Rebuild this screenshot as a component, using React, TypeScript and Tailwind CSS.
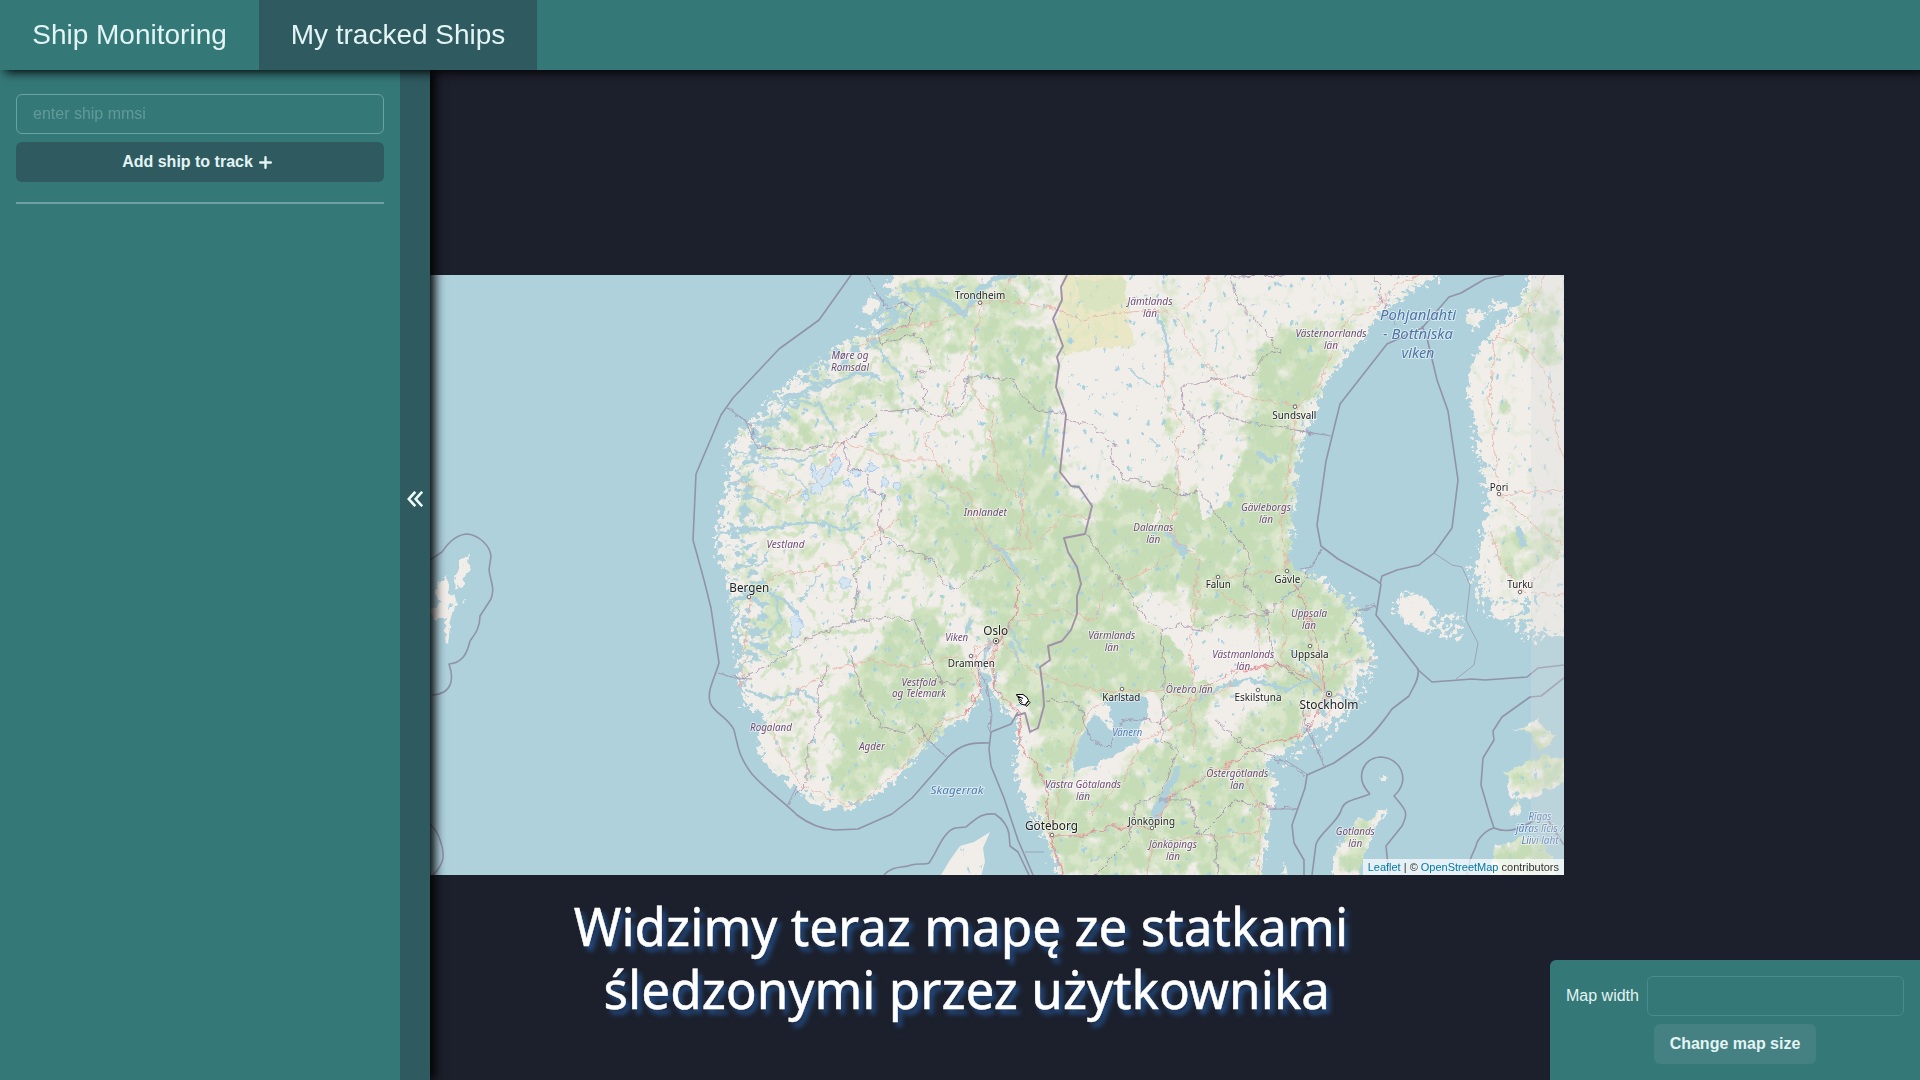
import React from 'react';

type Kind = 'city' | 'major' | 'county' | 'water' | 'sea' | 'gulf';
type Label = [string, number, number, number, Kind];

const LABELS: Label[] = [
  ['Trondheim', 980, 299.3, 50.7, 'city'],
  ['Møre og', 850, 359, 37, 'county'],
  ['Romsdal', 850, 371, 38, 'county'],
  ['Innlandet', 985.3, 516, 43, 'county'],
  ['Vestland', 785.5, 548, 38, 'county'],
  ['Jämtlands', 1150, 305, 45, 'county'],
  ['län', 1150, 317, 14, 'county'],
  ['Västernorrlands', 1331, 337.3, 71, 'county'],
  ['län', 1331, 349.3, 14, 'county'],
  ['Sundsvall', 1294.3, 418.7, 44, 'city'],
  ['Pori', 1499, 490.7, 18.5, 'city'],
  ['Gävleborgs', 1266, 511.3, 50, 'county'],
  ['län', 1266, 523.3, 14, 'county'],
  ['Dalarnas', 1153.3, 530.7, 40, 'county'],
  ['län', 1153.3, 542.7, 14, 'county'],
  ['Pohjanlahti', 1418, 320.3, 76, 'gulf'],
  ['- Bottniska', 1418, 339, 70, 'gulf'],
  ['viken', 1418, 358, 33, 'gulf'],
  ['Bergen', 749.3, 592, 40, 'major'],
  ['Rogaland', 771, 731.3, 42, 'county'],
  ['Viken', 956.7, 641.3, 23, 'county'],
  ['Oslo', 995.7, 635, 25, 'major'],
  ['Drammen', 971.3, 667, 47, 'city'],
  ['Vestfold', 919, 685.7, 35, 'county'],
  ['og Telemark', 919, 697.3, 54, 'county'],
  ['Agder', 872, 750.3, 26, 'county'],
  ['Värmlands', 1111.7, 639, 47, 'county'],
  ['län', 1111.7, 651, 14, 'county'],
  ['Karlstad', 1121.3, 700.5, 38, 'city'],
  ['Vänern', 1127.3, 736.3, 30, 'water'],
  ['Skagerrak', 957, 794.3, 53, 'sea'],
  ['Västra Götalands', 1083, 787.5, 76, 'county'],
  ['län', 1083, 799.5, 14, 'county'],
  ['Göteborg', 1051.5, 830, 53, 'major'],
  ['Jönköping', 1151.5, 824.7, 47, 'city'],
  ['Jönköpings', 1173, 847.5, 48, 'county'],
  ['län', 1173, 859.5, 14, 'county'],
  ['Falun', 1218.3, 588, 25, 'city'],
  ['Gävle', 1287.3, 582.5, 26, 'city'],
  ['Uppsala', 1309, 616.7, 36, 'county'],
  ['län', 1309, 628.5, 14, 'county'],
  ['Turku', 1520.3, 587.5, 26, 'city'],
  ['Uppsala', 1309.7, 657.5, 38, 'city'],
  ['Västmanlands', 1243.3, 658, 62, 'county'],
  ['län', 1243.3, 670, 14, 'county'],
  ['Örebro län', 1189.3, 693, 47, 'county'],
  ['Eskilstuna', 1258, 700.7, 47, 'city'],
  ['Stockholm', 1329, 709, 59, 'major'],
  ['Östergötlands', 1237.3, 776.7, 62, 'county'],
  ['län', 1237.3, 788.7, 14, 'county'],
  ['Gotlands', 1355.3, 835, 39, 'county'],
  ['län', 1355.3, 847, 14, 'county'],
  ['Rīgas', 1540, 820.3, 23, 'water'],
  ['jūras līcis /', 1540, 832, 48, 'water'],
  ['Liivi laht', 1540, 844, 37, 'water'],
];

const KIND: Record<Kind, { size: number; fill: string; italic: boolean }> = {
  city: { size: 10.4, fill: '#222222', italic: false },
  major: { size: 12.2, fill: '#222222', italic: false },
  county: { size: 10.2, fill: '#6f4d75', italic: true },
  water: { size: 10.2, fill: '#4f7db5', italic: true },
  sea: { size: 11.4, fill: '#4f7db0', italic: true },
  gulf: { size: 15, fill: '#4a76a8', italic: true },
};

const DOTS: [number, number][] = [
  [980, 302.7], [1295, 406.7], [1499, 494], [749, 597], [971, 656], [1122, 689], [1052, 835],
  [1152, 828], [1218, 577], [1287, 571], [1310, 646], [1258, 690], [1520, 592],
];

const SCANDINAVIA =
  'M892 275 L884 288 L905 292 L890 310 L867 330 L847 342 L828 357 L815 370 L797 374 L783 393 L763 413 L743 430 L733 443 L731 467 L725 493 L723 513 L718 533 L723 560 L727 577 L733 600 L738 627 L742 660 L743 707 L757 710 L763 720 L758 743 L767 767 L797 787 L807 800 L830 808 L853 807 L873 797 L893 783 L913 760 L937 737 L953 723 L967 720 L980 700 L981 684 L977 672 L986 668 L993 677 L993 693 L1003 710 L1018 720 L1018 747 L1017 773 L1028 807 L1040 823 L1047 843 L1060 880 L1261 880 L1267 843 L1273 810 L1277 780 L1262 762 L1283 752 L1303 737 L1320 727 L1347 713 L1357 683 L1374 657 L1360 620 L1340 597 L1323 580 L1303 573 L1290 565 L1292 520 L1297 473 L1300 447 L1313 417 L1320 390 L1340 363 L1363 337 L1383 310 L1407 293 L1450 270 L892 270Z';
const FINLAND =
  'M1532 270 L1520 303 L1493 330 L1473 358 L1467 393 L1477 427 L1483 467 L1488 500 L1483 533 L1477 560 L1480 580 L1490 602 L1527 600 L1532 630 L1570 637 L1570 270Z';
const ISLANDS = [
  'M864 303 l10 -5 l7 5 l-2 9 l-10 3 l-7 -6z',
  'M884 296 l24 -13 l17 -3 l-4 9 l-20 10z',
  'M738 426 l16 6 l6 11 l-14 -5z',
  'M728 450 l12 4 l8 8 l-14 4z',
  'M1400 598 l16 -5 l14 7 l6 15 l-12 12 l-16 -2 l-11 -12z',
  'M1418 622 l12 4 l-4 7 l-8 -3z M1434 625 l10 -4 l-2 8z M1456 637 l8 -2 l-4 7z',
  'M1490 610 l12 -8 l22 3 l-4 8 l-22 7z',
  'M1466 311 l12 -4 l6 9 l-8 12 l-9 -5z M1490 306 l14 -4 l4 6 l-12 4z',
  'M1512 728 l14 1 l12 -14 l4 14 l14 6 l-6 10 l-13 6 l-5 -17z',
  'M1503 772 l14 -5 l28 -12 l19 4 l6 -8 v30 l-20 8 l-18 8 l-16 3 l-10 -12 l4 -8z',
  'M1509 812 l11 -12 l-1 14 l-8 4z',
  'M1490 880 l5 -33 l38 -12 l20 22 l3 25z',
  'M1333 880 l0 -26 l14 -20 l12 -16 l12 3 l10 -11 l8 3 l-14 11 l-6 20 l-7 18 l-3 20z',
  'M1280 872 l5 -8 l2 10z',
  'M1380 776 l5 0 l1 4 l-5 0z',
];
const SKERRIES: [string, number][] = [
  ['M880 282 L850 338 L815 364 L780 388 L745 424 L726 446 L726 490 L716 520 L716 555 L730 590 L734 630 L740 700', 9],
  ['M1395 600 L1430 620 L1465 630', 32],
  ['M1478 560 L1490 600 L1525 620 L1545 640', 34],
  ['M1470 420 L1480 470 L1484 520', 8],
  ['M1376 640 L1370 675 L1358 705 L1325 738 L1280 765', 12],
  ['M1024 725 L1014 770 L1032 815 L1046 845', 10],
  ['M1500 300 L1470 330', 16],
  ['M1345 590 L1365 620', 12],
];
const COAST_INLETS: [string, number][] = [
  ['M905 300 L860 345 L805 390 L760 440 L745 480 L740 540 L752 600 L758 670', 34],
  ['M1362 650 L1345 695 L1300 735 L1275 765', 16],
  ['M1240 690 L1290 682 L1330 700', 14],
  ['M880 290 L930 290 L985 285', 18],
  ['M1270 800 L1262 875', 10],
];
const DENMARK = 'M938 880 L950 860 L960 846 L974 842 L990 832 L983 848 L985 862 L980 880Z';
const SHETLAND =
  'M464 557 l6 -2 l-1 12 l-6 14 l2 4 l-10 5 l-1 -12z M441 580 l6 -5 l1 18 l8 4 l-2 14 l-4 14 l-2 20 l-4 -2 l2 -24 l-12 0 l-3 -10 l10 -6 l-6 -8z M461 600 l4 -1 l-2 4z';

const GREENS: [string, number][] = [
  ['M900 275 L1040 275 L1060 350 L1064 410 L1000 400 L960 360 L900 340 L870 330Z', 0.78],
  ['M1000 385 L1050 390 L1065 480 L1085 500 L1075 560 L1080 640 L1060 690 L1000 660 L970 600 L945 550 L940 500 L990 450Z', 0.9],
  ['M1055 545 L1080 545 L1090 490 L1100 560 L1080 640 L1060 720 L1035 710 L1045 660Z', 1],
  ['M735 430 L830 360 L900 320 L930 400 L880 420 L830 450 L745 460Z', 0.6],
  ['M735 470 L870 490 L860 540 L800 560 L735 540Z', 0.52],
  ['M890 470 L960 470 L970 570 L930 590 L890 550Z', 0.7],
  ['M840 690 L890 620 L930 600 L985 690 L940 735 L860 805 L825 800 L835 740Z', 0.95],
  ['M740 570 L800 560 L800 600 L790 680 L750 660Z', 0.68],
  ['M770 700 L830 700 L810 780 L775 760Z', 0.5],
  ['M985 660 L1035 660 L1030 715 L1005 705Z', 0.85],
  ['M1075 535 L1120 478 L1195 490 L1290 440 L1292 560 L1350 600 L1330 640 L1240 610 L1180 600 L1140 590 L1130 610 L1180 650 L1170 700 L1060 700 L1090 600Z', 1],
  ['M1252 355 L1275 325 L1300 325 L1330 350 L1322 390 L1300 420 L1295 520 L1260 520 L1235 440 L1255 400Z', 1],
  ['M1200 395 L1235 392 L1225 415 L1200 410Z', 0.9],
  ['M1108 570 L1180 520 L1250 540 L1285 560 L1260 640 L1200 610 L1170 560 L1130 590Z', 0.9],
  ['M1160 640 L1200 600 L1220 690 L1200 760 L1165 740Z', 0.9],
  ['M1030 790 L1090 790 L1150 740 L1200 745 L1260 740 L1270 790 L1262 880 L1060 880Z', 0.9],
  ['M1280 600 L1360 600 L1365 660 L1340 700 L1290 720 L1260 690Z', 0.85],
  ['M1225 720 L1300 700 L1310 735 L1260 755Z', 0.9],
  ['M1030 690 L1095 690 L1085 750 L1050 800 L1030 790Z', 0.9],
  ['M1160 280 L1180 280 L1185 330 L1165 350Z', 0.7],
  ['M1162 395 L1176 395 L1176 485 L1162 485Z', 0.85],
  ['M1285 345 L1370 300 L1360 330 L1320 375Z', 0.65],
  ['M1520 290 L1564 275 L1564 370 L1530 370 L1505 340Z', 0.7],
  ['M1490 400 L1510 396 L1512 410 L1495 416Z', 1],
  ['M1487 530 L1564 510 L1564 560 L1500 590Z', 0.75],
  ['M1500 740 L1570 710 L1570 800 L1500 800Z', 0.85],
  ['M1490 840 L1560 830 L1560 880 L1490 880Z', 1],
  ['M1335 820 L1385 812 L1370 880 L1335 880Z', 0.75],
];

const VALLEYS: [string, number][] = [
  ['M730 275 L1065 275 L1065 420 L1080 500 L1080 700 L940 740 L870 800 L800 790 L730 700Z', 0.85],
  ['M1065 275 L1560 275 L1560 640 L1065 460Z', 0.25],
];

const SEA_BORDERS = [
  'M851 275 L819 320 L779 349 L733 398 L721 415 L696 474 L693 540 L704 580 L711 608 L719 663 C714 680 707 690 710 702 C712 712 728 717 734 730 C738 745 738 756 752 774 C764 788 785 803 797 815 C810 825 822 829 835 830 L858 829 L892 814 L912 798 L948 757 C960 745 970 742 990 743',
  'M1018 712 L1011 724 L991 732 L989 749 L991 766 L1004 798 L1018 840 L1033 875',
  'M884 875 C892 865 905 868 911 865 C918 863 925 865 929 863 C938 850 943 832 955 828 L966 827 C978 817 982 813 995 814 C1004 820 1008 828 1009 834 L1010 846 L1018 852 L1029 875',
  'M430 560 L442 552 C450 540 459 534 468 534 C480 536 490 546 491 556 L489 570 C491 583 495 588 491 599 L480 616 C480 628 475 634 470 641 C467 654 462 663 449 664 C454 678 453 694 432 695',
  'M430 824 C439 832 444 848 443 858 C442 865 438 870 433 875',
  'M1504 275 L1485 279 L1461 293 L1449 297 L1422 328 L1387 344 L1340 404 L1326 461 L1317 525 L1321 546 L1338 559 L1376 580 L1381 584 L1376 615 L1418 669 C1420 680 1411 690 1409 696 L1392 709 C1380 726 1372 736 1361 744 L1334 763 L1307 775 L1305 788 L1292 825 L1294 843 L1304 860 L1304 875',
  'M1422 326 L1427 338 L1437 380 L1448 411 L1458 480 L1452 528 L1434 553 L1419 565 L1397 570 L1382 576 L1380 584',
  'M1417 669 L1432 682 L1472 679 L1485 680 L1527 677 L1538 668 L1564 665',
  'M1564 678 L1541 696 L1530 697 L1502 717 L1493 731 L1494 740 L1483 758 L1481 785 L1490 816 L1494 828 C1485 830 1477 840 1476 846 L1470 860 L1467 875',
  'M1494 828 C1510 835 1525 826 1535 820 M1548 820 L1564 845',
  'M1370 794 C1354 778 1363 758 1380 757 C1400 757 1412 780 1394 796 C1406 810 1409 812 1402 826 L1386 846 L1389 875',
  'M1370 794 C1355 800 1345 800 1342 808 C1338 823 1321 831 1316 844 L1312 875',
];

const LAND_BORDER =
  'M1067 275 L1061 287 L1062 300 L1053 319 L1063 346 L1057 357 L1059 365 L1056 387 L1066 415 L1060 472 L1071 486 L1079 487 L1092 506 L1085 534 L1064 538 L1068 552 L1077 567 L1081 584 L1077 596 L1077 614 L1071 630 L1062 641 L1048 646 L1050 660 L1040 667 L1043 690 L1044 706 L1038 728 L1030 732 L1025 713 L1015 716';

const COUNTY_BORDERS = [
  'M865 275 L878 292 L887 310 L905 302 L912 310 L909 325 L878 331 L882 344 L915 333 L925 345 L932 366 L914 376 L927 390 L921 409 L880 412 L862 430 L842 443 L803 450 L757 448 L750 425 L728 408',
  'M920 409 L945 419 L962 404 L968 377 L1010 378 L1035 410 L1062 414',
  'M842 443 L850 470 L866 469 L870 490 L885 495 L878 520 L880 545 L855 572 L858 590 L850 622 L805 640 L765 668 L740 678 L718 673',
  'M878 528 L905 550 L933 560 L940 580 L955 590 L978 570 L1000 560',
  'M850 622 L900 617 L915 622 L925 645 L933 665 L942 685 L963 680',
  'M830 665 L818 690 L820 715 L807 750 L807 780 L787 806',
  'M850 650 L862 695 L880 727 L905 733 L917 723 L928 740 L946 757',
  'M977 670 L987 685 L991 710 L990 732',
  'M1065 420 L1090 424 L1115 445 L1110 455 L1123 478 L1162 485 L1175 495 L1195 494 L1197 485 L1220 520 L1240 540 L1250 560 L1242 580 L1268 615 L1282 600 L1300 585 L1310 570 L1322 548',
  'M1290 275 L1230 276 L1236 300 L1265 330 L1280 352 L1265 355 L1252 376 L1230 377 L1181 387 L1183 408 L1197 421 L1217 412 L1245 422 L1331 436',
  'M1197 421 L1208 438 L1195 450 L1190 460 L1178 455',
  'M1085 534 L1113 570 L1143 614 L1160 630 L1180 625 L1200 630 L1225 616 L1250 615 L1268 615 L1273 660 L1300 680',
  'M1375 275 L1385 310 L1396 325',
  'M1162 632 L1164 680 L1162 740 L1178 750 L1160 795 L1135 805 L1130 840 L1095 875',
  'M1046 700 L1080 705 L1090 740 L1110 745 L1125 718 L1160 722',
  'M1215 720 L1245 745 L1280 760 L1307 774',
  'M1160 800 L1190 800 L1198 835 L1215 835 L1218 875 M1200 835 L1235 800 L1270 808 L1297 809',
  'M1300 700 L1315 745 L1324 766 M1376 606 L1358 610 L1345 640',
];

const ROADS = [
  'M980 302 L974 340 L963 370 L948 390 L944 420 L923 436 L942 470 L950 485 L970 495 L985 530 L1000 560 L1020 580 L1015 615 L1000 636 L990 660 L995 690 L1018 710 L1020 745 L1045 780 L1050 835 L1063 875',
  'M1013 275 L1000 299 L980 302 L940 322 L900 328 L860 345',
  'M842 442 L900 460 L935 460 L945 475 M735 480 L765 490 L785 500 L820 480 L842 442',
  'M998 640 L975 648 L970 665 L980 690 L962 717 L940 720 L920 740 L905 765 L870 795 L848 806 L800 785 L775 740 L770 720',
  'M749 600 L775 575 L810 570 L850 560 L870 535 L900 520',
  'M1000 636 L1030 615 L1060 610 L1095 620 L1105 590 L1150 570 L1180 545 L1170 520 L1150 500',
  'M1000 640 L1030 670 L1070 685 L1110 692 L1160 690 L1195 700 L1225 690 L1240 670 L1280 664 L1310 675 L1328 695',
  'M1052 836 L1080 835 L1115 825 L1152 828 L1170 795 L1215 770 L1240 760 L1260 745 L1300 735 L1310 710 L1328 695',
  'M1152 828 L1148 875 M1052 835 L1060 790 L1075 740 L1090 710 L1120 690',
  'M1085 820 L1125 780 L1140 740 L1180 725 L1195 700 L1190 650 L1200 590 L1218 577 L1287 571 L1305 600 L1310 646 L1325 690',
  'M1287 571 L1281 530 L1290 460 L1297 406 L1320 385 L1335 345 L1350 318 L1380 305 L1395 285 L1420 275',
  'M1295 406 L1260 400 L1230 390 L1195 350 L1178 320 L1165 310 L1110 313 L1080 320 L1053 308 L1000 300',
  'M1183 310 L1205 290 L1208 275 M1165 350 L1163 390 L1185 430 L1175 440 L1180 480 L1170 535 L1200 560 L1190 620',
  'M1210 585 L1255 615 L1262 660 M1195 750 L1190 700 M1240 765 L1260 810 L1258 875 M1160 840 L1200 838 L1260 832',
  'M1545 275 L1530 310 L1495 335 L1490 400 L1499 494 L1540 530 L1564 545 M1499 494 L1564 490 M1495 335 L1530 350 L1550 380 L1555 430 L1564 460',
  'M1520 592 L1564 595 M1520 592 L1500 560 L1490 530 M1520 592 L1564 550 M1320 697 L1345 695 M1322 728 L1338 700',
  'M1322 690 L1340 665 L1374 658 M1280 664 L1285 640 L1282 600 M962 500 L990 550 L1030 548 L1065 515 L1090 518',
  'M1025 470 L1020 540 M740 690 L745 660 L750 600 M775 720 L800 690 L830 670 L870 660 L910 668 L960 655',
  'M970 378 L980 405 L995 415 L990 435 L1000 480 L1020 500 L1030 550',
];

const FJORDS: [string, number][] = [
  ['M720 534 L745 528 L765 530 L790 524 L818 522 L845 530 L860 522', 3],
  ['M733 452 L765 458 L800 460 L825 452', 2],
  ['M745 425 L775 420 L790 400 L820 405 L835 430', 2.5],
  ['M800 380 L830 385 L860 372 L880 378', 3],
  ['M860 335 L875 345 L890 365 L900 375', 2.5],
  ['M735 495 L760 500 L775 512', 1.5],
  ['M738 600 L760 590 L785 600 L800 620 L790 640', 3.5],
  ['M742 625 L765 640 L780 620 L775 590', 2.5],
  ['M746 690 L775 700 L800 690 L815 700', 2.5],
  ['M735 568 L760 565 L770 550', 2],
  ['M930 290 L950 302 L965 315 L975 295 L995 278 L1015 275', 5],
  ['M880 318 L905 316 L925 300 L915 282', 2],
  ['M985 668 L986 650 L990 640', 4],
  ['M995 545 L1010 560 L1018 575', 3.5],
  ['M1050 408 L1046 440 L1044 455', 3.5],
  ['M970 620 L965 635', 4],
  ['M1157 315 L1165 335 L1172 365', 4],
  ['M1215 350 L1220 330 M1130 370 L1150 385 M1150 440 L1160 448', 2],
  ['M1168 535 L1185 552', 7],
  ['M1178 770 L1162 800 L1155 815', 8],
  ['M1200 700 L1225 685 L1250 680 L1285 690 L1310 680', 3],
  ['M1290 650 L1310 668 L1330 695 L1350 700', 2.5],
  ['M1260 455 L1270 460 M1518 530 L1524 545', 6],
  ['M1010 640 L1018 660 M1008 625 L1022 650', 3],
  ['M820 575 L800 600 M930 490 L950 510 M1020 480 L1020 505', 1.5],
  ['M780 470 L800 480 L812 500 M842 520 L850 500 L865 490 M770 430 L772 410 M895 380 L905 400 M745 640 L770 655 L795 650', 1.6],
];

const GLACIERS: [number, number, number, number][] = [
  [824, 477, 8, 10], [836, 465, 5, 8], [817, 488, 5, 6], [812, 470, 2.5, 7], [806, 496, 4, 4], [763, 469, 3.5, 2.5], [774, 464, 2.5, 3],
  [847, 482, 3, 3], [856, 473, 3, 4], [872, 468, 5, 2.5], [884, 482, 3, 5], [896, 486, 3, 4], [866, 495, 2, 4],
  [899, 500, 2, 2.5], [796, 626, 5, 12], [845, 583, 5, 4], [815, 537, 2, 2], [874, 435, 2, 2], [901, 377, 1.5, 1.5], [849, 407, 1.5, 1.5], [840, 563, 2, 2.5],
];

const REGION = { x: 430, y: 275, width: 1134, height: 600 };

function BaseMap() {
  const filterBox = { ...REGION, filterUnits: 'userSpaceOnUse' as const, colorInterpolationFilters: 'sRGB' };
  return (
    <svg className="block h-full w-full" viewBox="430 275 1134 600" fontFamily='"Noto Sans", sans-serif'>
      <defs>
        <filter id="coast" {...filterBox}>
          <feTurbulence type="fractalNoise" baseFrequency="0.16" numOctaves={4} seed={4} />
          <feDisplacementMap in="SourceGraphic" scale={22} xChannelSelector="R" yChannelSelector="G" />
        </filter>
        <filter id="wiggle" {...filterBox}>
          <feTurbulence type="fractalNoise" baseFrequency="0.12" numOctaves={3} seed={9} />
          <feDisplacementMap in="SourceGraphic" scale={9} xChannelSelector="R" yChannelSelector="G" />
        </filter>
        <filter id="forest" {...filterBox}>
          <feGaussianBlur in="SourceGraphic" stdDeviation={7} result="soft" />
          <feTurbulence type="fractalNoise" baseFrequency="0.07 0.055" numOctaves={6} seed={12} result="noise" />
          <feComposite in="soft" in2="noise" operator="arithmetic" k1={0} k2={0.6} k3={1} k4={-0.55} />
          <feColorMatrix values="0 0 0 0 .76  0 0 0 0 .86  0 0 0 0 .705  0 0 0 4.5 -1.5" />
        </filter>
        <filter id="meadow" {...filterBox}>
          <feGaussianBlur in="SourceGraphic" stdDeviation={10} result="soft" />
          <feTurbulence type="fractalNoise" baseFrequency="0.05 0.06" numOctaves={6} seed={31} result="noise" />
          <feComposite in="soft" in2="noise" operator="arithmetic" k1={0} k2={0.6} k3={1} k4={-0.4} />
          <feColorMatrix values="0 0 0 0 .855  0 0 0 0 .90  0 0 0 0 .79  0 0 0 5 -1.8" />
        </filter>
        <filter id="valleys" {...filterBox}>
          <feGaussianBlur in="SourceGraphic" stdDeviation={8} result="soft" />
          <feTurbulence type="turbulence" baseFrequency="0.035 0.03" numOctaves={4} seed={17} />
          <feColorMatrix values="0 0 0 0 .80  0 0 0 0 .885  0 0 0 0 .74  0 0 0 -11 2.3" />
          <feComposite in2="soft" operator="in" />
        </filter>
        <filter id="skerries" {...filterBox}>
          <feGaussianBlur in="SourceGraphic" stdDeviation={3} result="soft" />
          <feTurbulence type="fractalNoise" baseFrequency="0.2" numOctaves={3} seed={7} result="noise" />
          <feComposite in="soft" in2="noise" operator="arithmetic" k1={0} k2={0.5} k3={1} k4={-0.5} />
          <feColorMatrix values="0 0 0 0 1  0 0 0 0 1  0 0 0 0 1  0 0 0 12 -6" />
        </filter>
        <filter id="inlets" {...filterBox}>
          <feGaussianBlur in="SourceGraphic" stdDeviation={6} result="soft" />
          <feTurbulence type="fractalNoise" baseFrequency="0.1 0.14" numOctaves={4} seed={21} result="noise" />
          <feComposite in="soft" in2="noise" operator="arithmetic" k1={0} k2={0.5} k3={1} k4={-0.5} />
          <feColorMatrix values="0 0 0 0 .682  0 0 0 0 .82  0 0 0 0 .863  0 0 0 12 -5.9" />
        </filter>
        <filter id="lakes" {...filterBox}>
          <feTurbulence type="fractalNoise" baseFrequency="0.15 0.11" numOctaves={4} seed={44} />
          <feColorMatrix values="0 0 0 0 .66  0 0 0 0 .82  0 0 0 0 .87  0 0 0 12 -8.4" />
        </filter>
        <mask id="land" maskUnits="userSpaceOnUse" {...REGION}>
          <g filter="url(#coast)" fill="#fff">
            <path d={SCANDINAVIA} />
            <path d={FINLAND} />
          </g>
          <g filter="url(#wiggle)" fill="#fff">
            {ISLANDS.map((d) => <path key={d} d={d} />)}
            <path d={SHETLAND} />
          </g>
          <g filter="url(#skerries)" fill="none" stroke="#fff" strokeLinejoin="round">
            {SKERRIES.map(([d, w]) => <path key={d} d={d} strokeWidth={w} />)}
          </g>
          <path d={DENMARK} fill="#fff" />
        </mask>
      </defs>

      <rect {...REGION} fill="#aed1dc" />

      <g mask="url(#land)">
        <rect {...REGION} fill="#f1eeea" />
        <g filter="url(#meadow)">
          {GREENS.map(([d, o]) => <path key={d} d={d} opacity={o} />)}
        </g>
        <g filter="url(#wiggle)">
          <path d="M1063 275 L1125 275 L1128 315 L1135 346 L1062 356 L1056 330Z" fill="#e9e7c6" />
          <path d="M1075 280 L1125 278 L1125 305 L1085 312Z" fill="#dbe4c0" />
        </g>
        <g filter="url(#valleys)">
          {VALLEYS.map(([d, o]) => <path key={d} d={d} opacity={o} />)}
        </g>
        <g filter="url(#forest)" opacity={0.88}>
          {GREENS.map(([d, o]) => <path key={d} d={d} opacity={o} />)}
        </g>
        <g filter="url(#wiggle)" fill="#f1eeea">
          <path d="M1102 347 L1162 347 L1162 480 L1120 475 L1090 440 L1065 420 L1063 356Z" />
          <path d="M1165 600 L1195 625 L1235 650 L1225 685 L1195 680 L1185 655 L1158 625Z" />
          <path d="M1150 530 L1160 500 L1163 515Z M1153 602 L1180 606 L1185 628 L1157 625Z" />
          <path d="M1195 490 L1220 440 L1235 460 L1228 500 L1205 522Z" />
        </g>
        <rect {...REGION} filter="url(#lakes)" />
        <g filter="url(#inlets)" fill="none" stroke="#000" strokeLinejoin="round">
          {COAST_INLETS.map(([d, w]) => <path key={d} d={d} strokeWidth={w} />)}
        </g>
      </g>

      <g filter="url(#wiggle)" fill="none" stroke="#aed1dc" strokeLinecap="round" strokeLinejoin="round">
        {FJORDS.map(([d, w]) => <path key={d} d={d} strokeWidth={w} />)}
        <path
          d="M1108 698 L1122 694 L1146 697 L1148 715 L1138 728 L1140 742 L1110 758 L1098 764 L1072 772 L1078 745 L1088 724 L1094 712 L1112 730 L1110 712Z"
          fill="#aed1dc"
          stroke="none"
        />
      </g>

      <g filter="url(#wiggle)" fill="#d6e6f0" stroke="#a4c8f0" strokeWidth={1}>
        {GLACIERS.map(([x, y, rx, ry]) => <ellipse key={`${x}-${y}`} cx={x} cy={y} rx={rx} ry={ry} />)}
      </g>

      <g filter="url(#wiggle)" fill="none" strokeLinejoin="round">
        <g stroke="#e8b3a6" strokeWidth={1} opacity={0.9}>
          {ROADS.map((d) => <path key={d} d={d} />)}
        </g>
        <g stroke="#dc8594" strokeWidth={1} opacity={0.8}>
          <path d="M1000 555 L1020 580 L1015 615 L1000 640 L992 660 L995 690 L1018 712 L1021 745 L1045 780 L1050 835 L1062 875 M1052 836 L1080 836 L1110 826 L1152 828 L1172 795 L1240 760 L1260 745 L1303 735 L1328 697 L1310 680 L1280 664 L1235 670 L1200 690 L1160 725" />
          <path d="M1325 690 L1320 650 L1303 605 L1295 580 M998 642 L975 655 L980 690 L962 717 M945 722 L920 745" />
        </g>
        <g stroke="#a189a8" strokeWidth={0.9} opacity={0.85}>
          {COUNTY_BORDERS.map((d) => <path key={d} d={d} />)}
        </g>
      </g>
      <path
        d="M1434 553 L1452 565 L1462 567 L1470 585 L1466 620 L1478 643 L1474 665 L1456 679 M727 408 L745 420 L752 436 M718 673 L735 678 L752 679 M787 806 L797 786 M928 740 L946 757 M1321 549 L1312 567 L1300 569 M1376 606 L1358 611 M1297 809 L1270 809 M1307 774 L1285 760 M1324 766 L1315 745 L1306 728 M1331 436 L1295 430 M990 732 L992 715 L987 685 M1025 852 L1044 852"
        fill="none"
        stroke="#9c9db3"
        strokeWidth={0.9}
      />
      <path d={LAND_BORDER} fill="none" stroke="#a091a8" strokeWidth={1.9} strokeLinejoin="round" />
      <g fill="none" stroke="#9193a9" strokeWidth={1.6} strokeLinejoin="round">
        {SEA_BORDERS.map((d) => <path key={d} d={d} />)}
      </g>

      <g fill="#fff" stroke="#444" strokeWidth={0.8}>
        {DOTS.map(([x, y]) => <circle key={`${x}-${y}`} cx={x} cy={y} r={1.8} />)}
        <circle cx={996} cy={641} r={2.8} />
        <circle cx={1329} cy={694} r={2.8} />
        <g fill="#444" stroke="none">
          <circle cx={996} cy={641} r={1.2} />
          <circle cx={1329} cy={694} r={1.2} />
        </g>
      </g>

      {LABELS.map(([text, x, y, width, kind]) => {
        const k = KIND[kind];
        return (
          <text
            key={`${text}-${x}-${y}`}
            x={x}
            y={y}
            textAnchor="middle"
            textLength={width}
            lengthAdjust="spacingAndGlyphs"
            fontSize={k.size}
            fontStyle={k.italic ? 'italic' : 'normal'}
            fill={k.fill}
            stroke="#fff"
            strokeOpacity={0.55}
            strokeWidth={2}
            strokeLinejoin="round"
            paintOrder="stroke"
          >
            {text}
          </text>
        );
      })}

      <rect x="1531" y="275" width="33" height="600" fill="#dcdcdc" opacity={0.3} />

      <g transform="translate(1016 694)" fill="#fff" stroke="#000" strokeWidth={1} strokeLinejoin="round">
        <path d="M0.5 0.5 H7 L11 3.5 L12.5 6.5 L9 11 L5 10 L3.5 8.5 L4.5 7.5 L2.5 6 L3.5 5 L2 3.5 H5 L1 2Z" />
        <path d="M5 3.5 L7 4.5 M4 5.5 L6 6.5 M5 8 L6.5 8.5" />
        <path d="M9.5 11 L12.5 7 L14 8.5 L10.5 12.5Z" />
      </g>
    </svg>
  );
}

export default function App() {
  return (
    <div className="flex h-[1080px] w-[1920px] flex-col overflow-hidden bg-[#1c202c] font-['Liberation_Sans',sans-serif] text-[#e2f4f4]">
      <header className="relative z-30 flex h-[70px] shrink-0 bg-[#357878] text-[28px] shadow-[5px_2px_10px_black]">
        <div className="flex w-[259px] items-center justify-center">Ship Monitoring</div>
        <div className="flex w-[278px] items-center justify-center bg-[#2f5a60]">My tracked Ships</div>
      </header>

      <div className="flex min-h-0 flex-1">
        <aside className="relative z-20 flex w-[430px] shrink-0 bg-[#357878] shadow-[5px_0_10px_black]">
          <div className="flex flex-1 flex-col px-4 pt-6">
            <input
              className="h-10 w-full rounded-md border border-[#6ba2a4] bg-transparent px-4 text-base outline-none placeholder:text-[#629a9b]"
              placeholder="enter ship mmsi"
            />
            <button className="mt-2 flex h-10 w-full items-center justify-center gap-1.5 rounded-md bg-[#2f5a60] pr-1.5 text-base font-bold">
              Add ship to track
              <svg className="mt-px h-[13px] w-[13px]" viewBox="0 0 13 13" stroke="currentColor" strokeWidth={2.4} strokeLinecap="round">
                <path d="M6.5 1.2v10.6M1.2 6.5h10.6" />
              </svg>
            </button>
            <div className="mt-5 h-0.5 bg-[#6ba2a4]" />
          </div>
          <div className="flex w-[30px] items-center justify-center bg-[#2f5a60]">
            <svg className="-mt-[152px] h-4 w-4" viewBox="0 0 16 16" fill="none" stroke="#f0ffff" strokeWidth={2.6}>
              <path d="M8.3 0.8L1.8 8l6.5 7.2M15.2 0.8L8.7 8l6.5 7.2" />
            </svg>
          </div>
        </aside>

        <main className="relative flex-1 pt-[205px]">
          <div className="relative h-[600px] w-[1134px]">
            <BaseMap />
            <div className="absolute right-0 bottom-0 flex h-4 items-center bg-white/70 px-[5px] text-[11px] whitespace-pre text-[#333]">
              <span className="text-[#0078a8]">Leaflet</span> | © <span className="text-[#0078a8]">OpenStreetMap</span> contributors
            </div>
          </div>
          <div className="absolute top-[824px] left-[130px] w-[800px] scale-x-[0.966] text-center font-['Noto_Sans',sans-serif] text-[53px] leading-[63px] whitespace-nowrap text-white [-webkit-text-stroke:0.5px_white] [text-shadow:4px_5px_5px_#23508c]">
            <p className="mr-[-2px]">Widzimy teraz mapę ze statkami</p>
            <p className="pl-[14px]">śledzonymi przez użytkownika</p>
          </div>
          <section className="absolute right-0 bottom-0 flex h-[120px] w-[370px] flex-col items-center rounded-tl-md bg-[#357878] px-4 pt-4">
            <label className="flex w-full items-center gap-2 whitespace-nowrap">
              Map width
              <input className="h-10 min-w-0 flex-1 rounded-md border border-[#4a8b8d] bg-transparent px-4 outline-none" />
            </label>
            <button className="mt-2 h-10 w-[162px] rounded-md bg-[#458082] font-bold">Change map size</button>
          </section>
        </main>
      </div>
    </div>
  );
}
